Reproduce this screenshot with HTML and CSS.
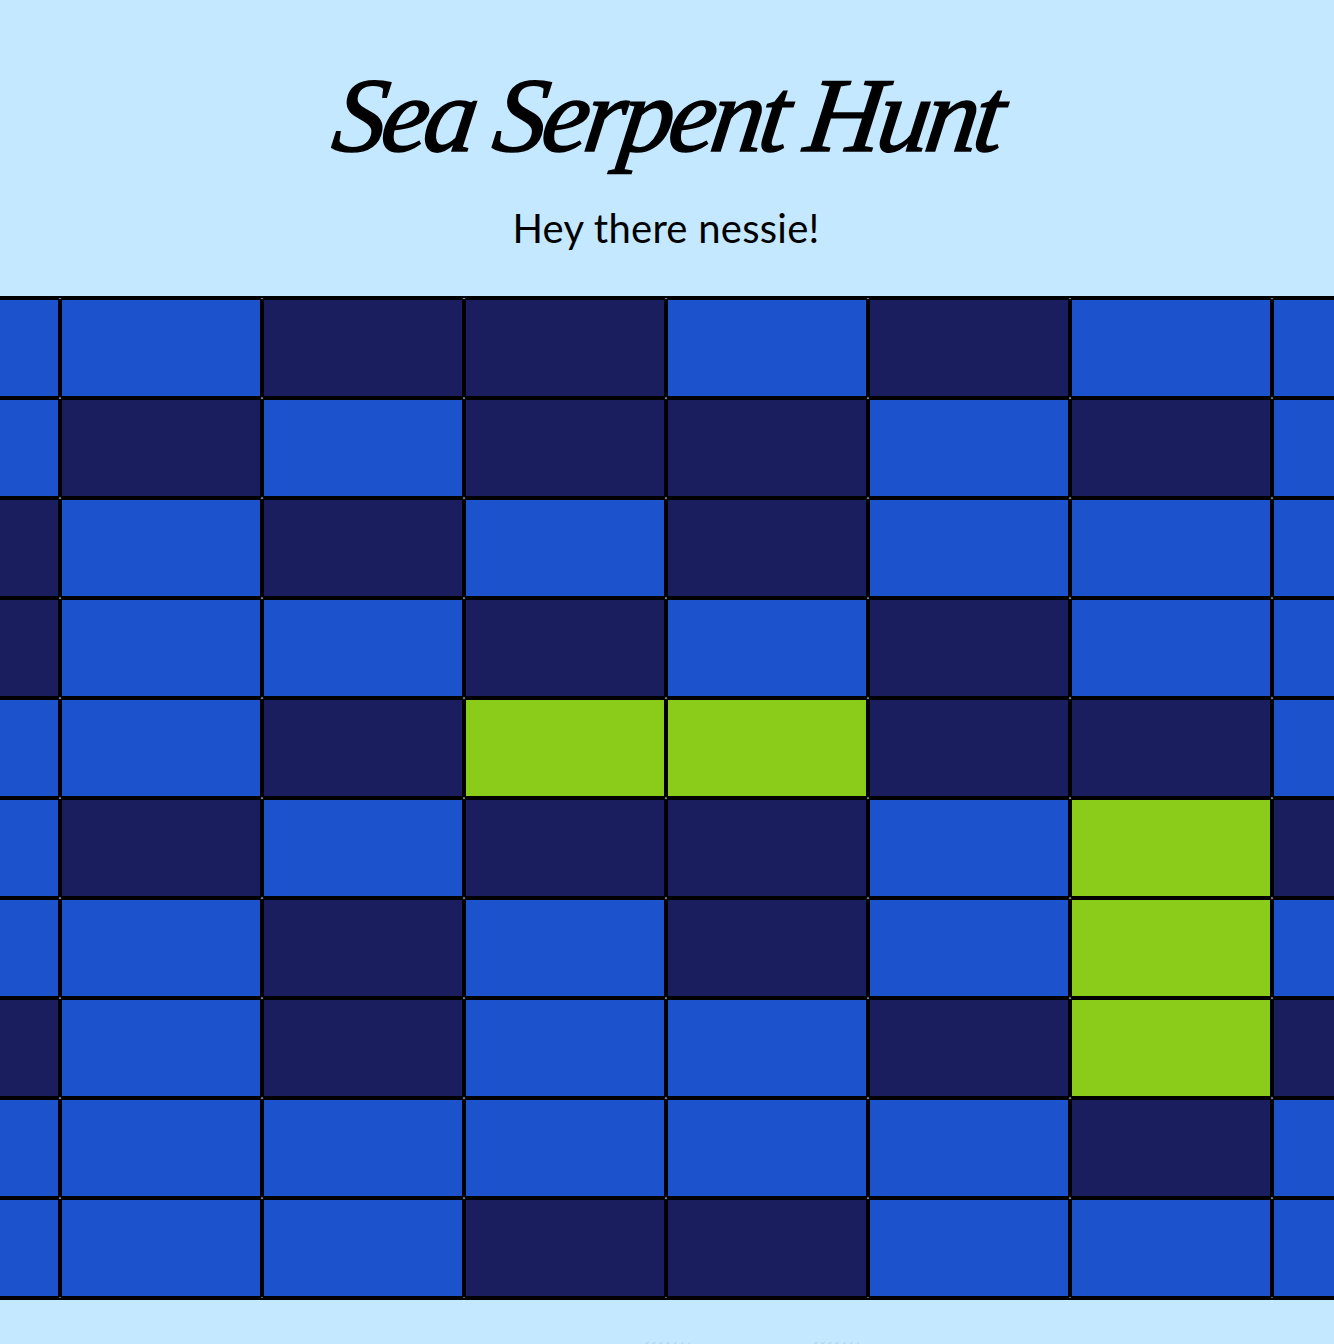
FILE: index.html
```html
<!DOCTYPE html>
<html lang="en">
<head>
<meta charset="utf-8">
<title>Sea Serpent Hunt</title>
<link rel="stylesheet" href="styles.css">
</head>
<body>
<header class="masthead">
<h1 class="title">Sea Serpent Hunt</h1>
<p class="greeting">Hey there nessie!</p>
</header>
<main class="board">
<div class="grid">
<div class="cell sea"></div><div class="cell sea"></div><div class="cell deep"></div><div class="cell deep"></div><div class="cell sea"></div><div class="cell deep"></div><div class="cell sea"></div><div class="cell sea"></div>
<div class="cell sea"></div><div class="cell deep"></div><div class="cell sea"></div><div class="cell deep"></div><div class="cell deep"></div><div class="cell sea"></div><div class="cell deep"></div><div class="cell sea"></div>
<div class="cell deep"></div><div class="cell sea"></div><div class="cell deep"></div><div class="cell sea"></div><div class="cell deep"></div><div class="cell sea"></div><div class="cell sea"></div><div class="cell sea"></div>
<div class="cell deep"></div><div class="cell sea"></div><div class="cell sea"></div><div class="cell deep"></div><div class="cell sea"></div><div class="cell deep"></div><div class="cell sea"></div><div class="cell sea"></div>
<div class="cell sea"></div><div class="cell sea"></div><div class="cell deep"></div><div class="cell hit"></div><div class="cell hit"></div><div class="cell deep"></div><div class="cell deep"></div><div class="cell sea"></div>
<div class="cell sea"></div><div class="cell deep"></div><div class="cell sea"></div><div class="cell deep"></div><div class="cell deep"></div><div class="cell sea"></div><div class="cell hit"></div><div class="cell deep"></div>
<div class="cell sea"></div><div class="cell sea"></div><div class="cell deep"></div><div class="cell sea"></div><div class="cell deep"></div><div class="cell sea"></div><div class="cell hit"></div><div class="cell sea"></div>
<div class="cell deep"></div><div class="cell sea"></div><div class="cell deep"></div><div class="cell sea"></div><div class="cell sea"></div><div class="cell deep"></div><div class="cell hit"></div><div class="cell deep"></div>
<div class="cell sea"></div><div class="cell sea"></div><div class="cell sea"></div><div class="cell sea"></div><div class="cell sea"></div><div class="cell sea"></div><div class="cell deep"></div><div class="cell sea"></div>
<div class="cell sea"></div><div class="cell sea"></div><div class="cell sea"></div><div class="cell deep"></div><div class="cell deep"></div><div class="cell sea"></div><div class="cell sea"></div><div class="cell sea"></div>
</div>
</main>
<footer class="trail">
<span class="mark mark-left"></span>
<span class="mark mark-right"></span>
</footer>
</body>
</html>
```
FILE: styles.css
```css
html, body {
  margin: 0;
  padding: 0;
  height: 100%;
  overflow: hidden;
  background: #c3e8ff;
}
.masthead {
  height: 296px;
  box-sizing: border-box;
  padding-top: 56px;
  text-align: center;
  color: #000;
}
.title {
  margin: 0;
  padding-right: 3px;
  height: 149px;
  font-family: "Liberation Serif", serif;
  font-style: italic;
  font-weight: 400;
  font-size: 106px;
  letter-spacing: -4.8px;
  line-height: 120px;
  -webkit-text-stroke: 1.6px #000;
  transform: skewX(-8deg);
}
.greeting {
  margin: 0;
  padding-right: 2px;
  font-family: Lato, sans-serif;
  font-size: 40px;
  letter-spacing: 0.25px;
  line-height: 46px;
}
.board {
  overflow: hidden;
  border-top: 2px solid #000;
  border-bottom: 2px solid #000;
}
.grid {
  display: grid;
  grid-template-columns: repeat(8, 202px);
  grid-auto-rows: 100px;
  width: 1616px;
  margin-left: -142px;
}
.cell {
  box-sizing: border-box;
  border: 2px solid #000;
  border-radius: 1.5px;
}
.sea { background: #1c52cc; }
.deep { background: #1b1e5e; }
.hit { background: #8bcc1b; }
.trail {
  display: flex;
  gap: 122px;
  padding: 42px 0 0 643px;
}
.mark {
  width: 47px;
  height: 2px;
  background: repeating-linear-gradient(-45deg, #b5daf3 0 2px, transparent 2px 5px);
}
```
